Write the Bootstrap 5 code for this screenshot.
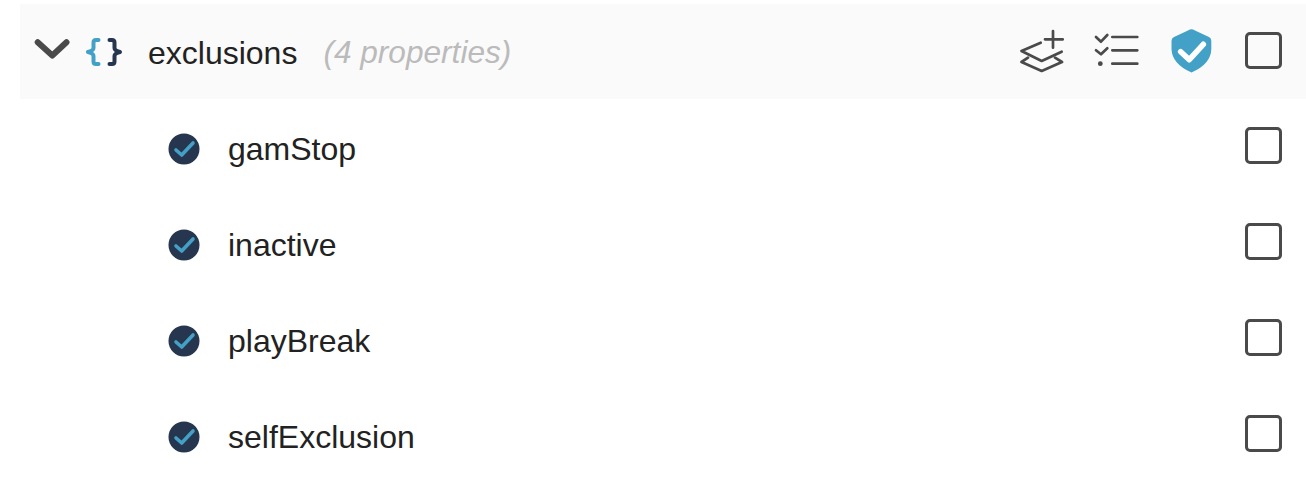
<!DOCTYPE html>
<html lang="en">
    <head>
        <meta charset="UTF-8">
        <title>Exclusions</title>
        <link href="https://cdn.jsdelivr.net/npm/bootstrap@5.3.0/dist/css/bootstrap.min.css" rel="stylesheet">
        <style>
            body { font-family: "Liberation Sans", Arial, sans-serif; font-size: 32px; color: #222; background: #fff; }
            .tree-wrap { padding: 4px 0 0 20px; }
            .tree-head { height: 95px; background: #fafafa; padding-left: 14px; padding-right: 24px; }
            .tree-row { height: 96px; padding-left: 148px; padding-right: 24px; }
            .tree-head + .tree-row { margin-top: 2px; }
            .prop-name { margin-left: 22px; padding-top: 2px; line-height: 1; }
            .prop-count { margin-left: 26px; padding-top: 2px; font-size: 31.6px; font-style: italic; color: #bbb; line-height: 1; }
            .row-label { margin-left: 28px; line-height: 1; }
            .tool-box { width: 37px; height: 37px; border: 3px solid #4a4a4a; border-radius: 5px; }
            .tree-row .tool-box { margin-bottom: 7px; }
            .tool-group { margin-bottom: 2px; }
            .gap-layers { margin-left: 30px; }
            .gap-shield { margin-left: 31px; }
            .gap-check { margin-left: 33px; }
        </style>
    </head>
    <body>
        <div class="tree-wrap">
            <div class="tree-head d-flex align-items-center">
                <svg width="36" height="28" viewBox="0 0 36 28" fill="none" class="flex-shrink-0">
                    <path d="M3.7 4.2 L18.3 17.5 L32.5 4.2" stroke="#4a4a4a" stroke-width="6" stroke-linecap="round" stroke-linejoin="round"/>
                </svg>
                <svg width="40" height="30" viewBox="0 0 40 30" fill="none" class="flex-shrink-0 ms-3">
                    <path d="M12.5 3 H10 Q7.5 3 7.5 5.5 V11 Q7.5 13.5 2 15 Q7.5 16.5 7.5 19 V24.5 Q7.5 27 10 27 H12.5" stroke="#43a1c7" stroke-width="4" stroke-linecap="round" stroke-linejoin="round"/>
                    <path d="M23.5 3 H26 Q28.5 3 28.5 5.5 V11 Q28.5 13.5 34 15 Q28.5 16.5 28.5 19 V24.5 Q28.5 27 26 27 H23.5" stroke="#26364f" stroke-width="4" stroke-linecap="round" stroke-linejoin="round"/>
                </svg>
                <span class="prop-name">exclusions</span>
                <span class="prop-count">(4 properties)</span>
                <div class="tool-group ms-auto d-flex align-items-center">
                    <svg width="44" height="44" viewBox="0 0 44 44" fill="none" stroke="#4a4a4a" stroke-width="2.7" stroke-linecap="round" stroke-linejoin="round">
                        <path d="M20.7 13.7 L1.5 22 L21.7 32 L41.7 22.7"/>
                        <path d="M8 28.7 L1.5 33 L21.7 42 L42 33 L35 28.7"/>
                        <path d="M33 2 V18.7 M25 10.3 H42.7"/>
                    </svg>
                    <svg width="46" height="44" viewBox="0 0 46 44" fill="none" stroke="#4a4a4a" stroke-width="2.7" stroke-linecap="round" stroke-linejoin="round" class="gap-layers">
                        <path d="M2 8 L7 12.7 L13.3 6"/>
                        <path d="M2 21.3 L7 25.3 L13.3 19.3"/>
                        <circle cx="6.3" cy="34.7" r="2.4" fill="#4a4a4a" stroke="none"/>
                        <path d="M18.3 8 H43.3 M18.3 21.3 H43.3 M18.3 34.7 H43.3"/>
                    </svg>
                    <svg width="41" height="44" viewBox="0 0 41 44" class="gap-shield">
                        <path d="M20.5 0.3 Q22 0.3 24 1.4 L38 8 Q40.3 9 40.3 12 V20 Q40 35 20.5 43.5 Q1 35 0.5 20 V12 Q0.5 9 3 8 L17 1.4 Q19 0.3 20.5 0.3 Z" fill="#43a1c7"/>
                        <path d="M9.7 22.7 L18.3 30.7 L32.3 15.3" fill="none" stroke="#fff" stroke-width="5.6" stroke-linecap="round" stroke-linejoin="round"/>
                    </svg>
                    <div class="tool-box gap-check"></div>
                </div>
            </div>
            <div class="tree-row d-flex align-items-center">
                <svg width="32" height="32" viewBox="0 0 32 32" class="flex-shrink-0"><circle cx="16" cy="16" r="15.5" fill="#26364f"/><path d="M8 17 L13.7 22 L25 10" fill="none" stroke="#43a1c7" stroke-width="3.6" stroke-linecap="round" stroke-linejoin="round"/></svg>
                <span class="row-label">gamStop</span>
                <div class="tool-box ms-auto"></div>
            </div>
            <div class="tree-row d-flex align-items-center">
                <svg width="32" height="32" viewBox="0 0 32 32" class="flex-shrink-0"><circle cx="16" cy="16" r="15.5" fill="#26364f"/><path d="M8 17 L13.7 22 L25 10" fill="none" stroke="#43a1c7" stroke-width="3.6" stroke-linecap="round" stroke-linejoin="round"/></svg>
                <span class="row-label">inactive</span>
                <div class="tool-box ms-auto"></div>
            </div>
            <div class="tree-row d-flex align-items-center">
                <svg width="32" height="32" viewBox="0 0 32 32" class="flex-shrink-0"><circle cx="16" cy="16" r="15.5" fill="#26364f"/><path d="M8 17 L13.7 22 L25 10" fill="none" stroke="#43a1c7" stroke-width="3.6" stroke-linecap="round" stroke-linejoin="round"/></svg>
                <span class="row-label">playBreak</span>
                <div class="tool-box ms-auto"></div>
            </div>
            <div class="tree-row d-flex align-items-center">
                <svg width="32" height="32" viewBox="0 0 32 32" class="flex-shrink-0"><circle cx="16" cy="16" r="15.5" fill="#26364f"/><path d="M8 17 L13.7 22 L25 10" fill="none" stroke="#43a1c7" stroke-width="3.6" stroke-linecap="round" stroke-linejoin="round"/></svg>
                <span class="row-label">selfExclusion</span>
                <div class="tool-box ms-auto"></div>
            </div>
        </div>
        <script src="https://cdn.jsdelivr.net/npm/bootstrap@5.3.0/dist/js/bootstrap.bundle.min.js"></script>
    </body>
</html>
